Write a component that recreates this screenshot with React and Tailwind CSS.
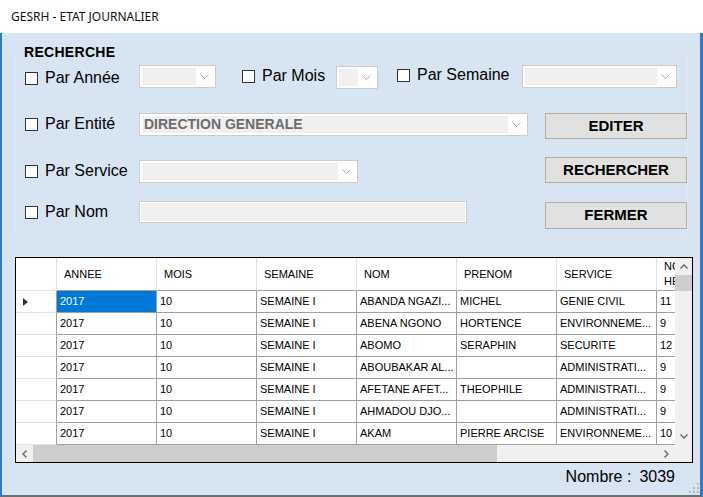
import React from 'react';

const rows = [
  ['2017', '10', 'SEMAINE I', 'ABANDA NGAZI...', 'MICHEL', 'GENIE CIVIL', '11'],
  ['2017', '10', 'SEMAINE I', 'ABENA NGONO', 'HORTENCE', 'ENVIRONNEME...', '9'],
  ['2017', '10', 'SEMAINE I', 'ABOMO', 'SERAPHIN', 'SECURITE', '12'],
  ['2017', '10', 'SEMAINE I', 'ABOUBAKAR AL...', '', 'ADMINISTRATI...', '9'],
  ['2017', '10', 'SEMAINE I', 'AFETANE AFET...', 'THEOPHILE', 'ADMINISTRATI...', '9'],
  ['2017', '10', 'SEMAINE I', 'AHMADOU DJO...', '', 'ADMINISTRATI...', '9'],
  ['2017', '10', 'SEMAINE I', 'AKAM', 'PIERRE ARCISE', 'ENVIRONNEME...', '10'],
];

const headers = ['ANNEE', 'MOIS', 'SEMAINE', 'NOM', 'PRENOM', 'SERVICE'];

function ChevronDown({ color = '#a8a8a8' }) {
  return (
    <svg width="9" height="5" viewBox="0 0 9 5">
      <polyline points="0.5,0.5 4.5,4.5 8.5,0.5" fill="none" stroke={color} strokeWidth="1" />
    </svg>
  );
}

function Arrow({ dir }) {
  const pts = {
    up: '0.5,4.5 4,1 7.5,4.5',
    down: '0.5,0.5 4,4 7.5,0.5',
    left: '4.5,0.5 1,4 4.5,7.5',
    right: '0.5,0.5 4,4 0.5,7.5',
  }[dir];
  const vertical = dir === 'up' || dir === 'down';
  return (
    <svg width={vertical ? 8 : 5} height={vertical ? 5 : 8} viewBox={vertical ? '0 0 8 5' : '0 0 5 8'}>
      <polyline points={pts} fill="none" stroke="#606060" strokeWidth="1.3" />
    </svg>
  );
}

function CheckItem({ label, className }) {
  return (
    <div className={`w-[114px] h-[18px] flex items-center shrink-0 ${className}`}>
      <div className="w-[13px] h-[13px] border border-[#333333] bg-white shrink-0" />
      <span className="ml-[7px] text-[16px] leading-[18px] text-black whitespace-nowrap">{label}</span>
    </div>
  );
}

function Combo({ className, children }) {
  return (
    <div className={`h-[23px] border border-[#cccccc] bg-white flex p-[2px] shrink-0 ${className}`}>
      <div className="flex-1 bg-[#f0f0f0] flex items-center pl-[2px] overflow-hidden">{children}</div>
      <div className="w-[17px] flex items-center justify-center">
        <ChevronDown />
      </div>
    </div>
  );
}

function Btn({ children, className }) {
  return (
    <div
      className={`w-[142px] border border-[#adadad] bg-[#e1e1e1] flex items-center justify-center text-[15px] font-bold text-black shrink-0 ${className}`}
    >
      {children}
    </div>
  );
}

export default function App() {
  return (
    <div className="w-[703px] h-[497px] bg-white overflow-hidden flex flex-col relative font-['Liberation_Sans',Arial,sans-serif]">
      {/* title bar */}
      <div className="h-[33px] shrink-0 flex items-center pl-[11px] text-[12px] text-[#111111] font-['Noto_Sans',sans-serif]">
        GESRH - ETAT JOURNALIER
      </div>

      <div className="flex-1 flex flex-col bg-[#d7e4f2] border-l-2 border-r-[3px] border-b-2 border-l-[#2b7bd2] border-r-[#2b7bd2] border-b-[#6e6e6e]">
        {/* search group */}
        <div className="ml-[13px] mt-[19px] w-[673px] h-[186px] border border-[#e4e8ee] relative">
          <span className="absolute left-[7px] top-[-9px] px-[1px] bg-[#d7e4f2] text-[14px] leading-[16px] font-bold tracking-[0.3px] text-black">
            RECHERCHE
          </span>

          <div className="mt-[12px] pl-[9px] h-[24px] flex items-start">
            <CheckItem label="Par Année" className="mt-[4px]" />
            <Combo className="w-[77px]" />
            <CheckItem label="Par Mois" className="ml-[26px] mt-[2px] !w-[94px]" />
            <Combo className="w-[42px] mt-[1px]" />
            <CheckItem label="Par Semaine" className="ml-[19px] mt-[1px] !w-[125px]" />
            <Combo className="w-[155px]" />
          </div>

          <div className="mt-[24px] pl-[9px] h-[26px] flex items-start">
            <CheckItem label="Par Entité" className="mt-[2px]" />
            <Combo className="w-[389px]">
              <span className="text-[14px] font-bold text-[#6d6d6d] whitespace-nowrap">DIRECTION GENERALE</span>
            </Combo>
            <Btn className="ml-[17px] h-[26px]">EDITER</Btn>
          </div>

          <div className="mt-[18px] pl-[9px] h-[26px] flex items-start">
            <CheckItem label="Par Service" className="mt-[5px]" />
            <Combo className="w-[219px] mt-[3px]" />
            <Btn className="ml-[187px] h-[26px]">RECHERCHER</Btn>
          </div>

          <div className="mt-[18px] pl-[9px] h-[28px] flex items-start">
            <CheckItem label="Par Nom" className="mt-[2px]" />
            <div className="w-[328px] h-[22px] border border-[#cccccc] bg-white p-[1px] shrink-0">
              <div className="w-full h-full bg-[#f0f0f0]" />
            </div>
            <Btn className="ml-[78px] mt-[1px] h-[27px]">FERMER</Btn>
          </div>
        </div>

        {/* data grid */}
        <div className="ml-[13px] mt-[19px] w-[678px] h-[206px] border border-black bg-white flex flex-col text-[11px] text-black">
          <div className="h-[187px] flex">
            <div className="w-[659px] overflow-hidden">
              <div className="flex w-[800px] h-[33px]">
                <div className="w-[41px] shrink-0 border-r border-b border-[#e2e2e2]" />
                {headers.map((h) => (
                  <div
                    key={h}
                    className="w-[100px] shrink-0 border-r border-r-[#e2e2e2] border-b border-b-[#a0a0a0] flex items-center pl-[7px]"
                  >
                    {h}
                  </div>
                ))}
                <div className="w-[100px] shrink-0 border-b border-b-[#a0a0a0] flex items-center pl-[7px] leading-[15px]">
                  NOMBRE
                  <br />
                  HEURES
                </div>
              </div>
              {rows.map((r, i) => (
                <div key={i} className="flex w-[800px] h-[22px]">
                  <div className="w-[41px] shrink-0 border-r border-r-[#a0a0a0] border-b border-b-[#e3e3e3] flex items-center pl-[7px]">
                    {i === 0 && (
                      <svg width="5" height="8" viewBox="0 0 5 8">
                        <polygon points="0,0 5,4 0,8" fill="#333333" />
                      </svg>
                    )}
                  </div>
                  {r.map((c, j) => (
                    <div
                      key={j}
                      className={`w-[100px] shrink-0 border-r border-b border-[#a0a0a0] pl-[3px] leading-[21px] whitespace-nowrap overflow-hidden ${
                        i === 0 && j === 0 ? 'bg-[#0078d7] text-white' : ''
                      }`}
                    >
                      {c}
                    </div>
                  ))}
                </div>
              ))}
            </div>
            {/* vertical scrollbar */}
            <div className="w-[17px] flex flex-col bg-[#f0f0f0]">
              <div className="h-[17px] flex items-center justify-center">
                <Arrow dir="up" />
              </div>
              <div className="h-[16px] bg-[#cdcdcd]" />
              <div className="flex-1" />
              <div className="h-[17px] flex items-center justify-center">
                <Arrow dir="down" />
              </div>
            </div>
          </div>
          {/* horizontal scrollbar */}
          <div className="h-[17px] flex">
            <div className="w-[659px] flex bg-[#f0f0f0]">
              <div className="w-[17px] flex items-center justify-center">
                <Arrow dir="left" />
              </div>
              <div className="w-[464px] bg-[#cdcdcd]" />
              <div className="flex-1" />
              <div className="w-[17px] flex items-center justify-center">
                <Arrow dir="right" />
              </div>
            </div>
            <div className="w-[17px] bg-[#f0f0f0]" />
          </div>
        </div>

        <div className="mt-[5px] pr-[25px] flex justify-end text-[16px] leading-[18px] text-black">
          <span>Nombre :</span>
          <span className="ml-[8px]">3039</span>
        </div>
      </div>

      {/* resize grip */}
      <svg className="absolute right-[4px] bottom-[4px]" width="10" height="10" viewBox="0 0 10 10">
        <rect x="8" y="0" width="2" height="2" fill="#b8b8b8" />
        <rect x="4" y="4" width="2" height="2" fill="#b8b8b8" />
        <rect x="8" y="4" width="2" height="2" fill="#b8b8b8" />
        <rect x="0" y="8" width="2" height="2" fill="#b8b8b8" />
        <rect x="4" y="8" width="2" height="2" fill="#b8b8b8" />
        <rect x="8" y="8" width="2" height="2" fill="#b8b8b8" />
      </svg>
    </div>
  );
}
